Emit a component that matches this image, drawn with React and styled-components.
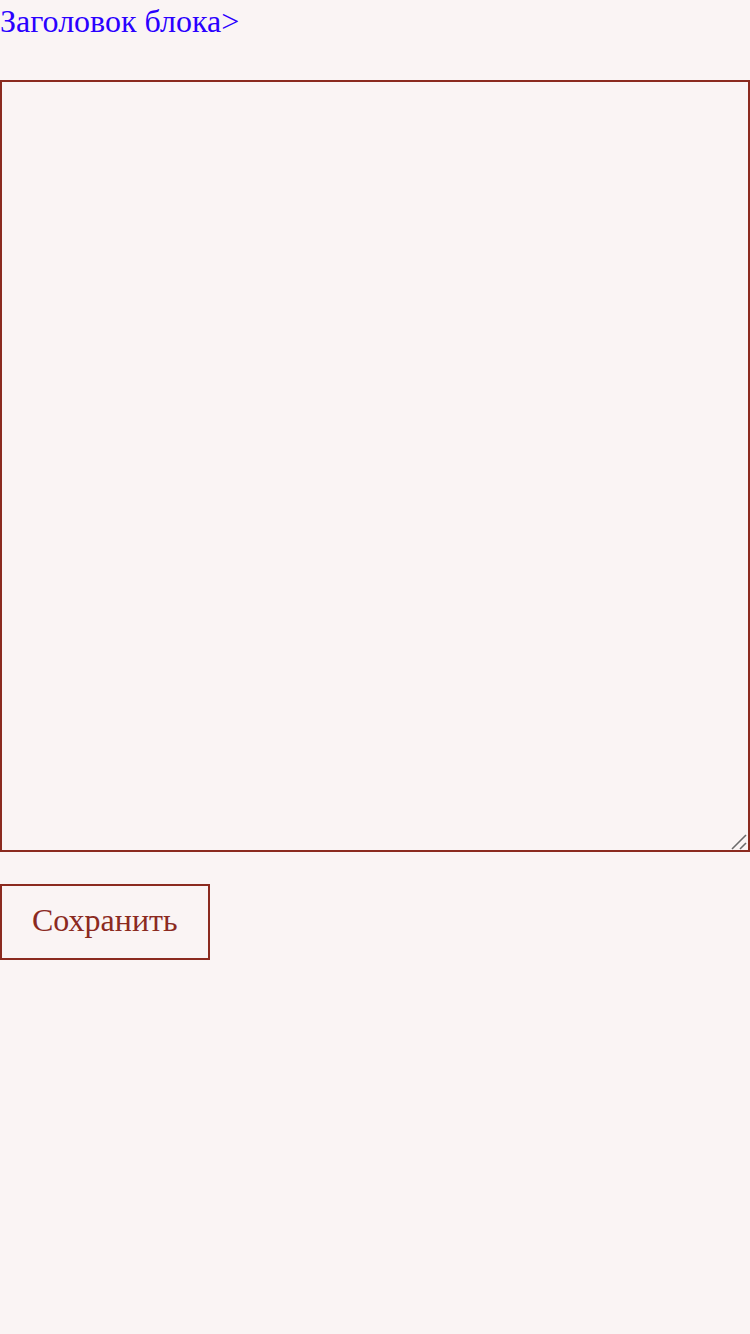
import React from "react";
import styled, { createGlobalStyle } from "styled-components";

const Global = createGlobalStyle`
  html, body { margin: 0; padding: 0; background: #faf4f4; }
  body { font-family: "Liberation Serif", "Times New Roman", serif; }
`;

const Page = styled.div`
  display: flex;
  flex-direction: column;
  align-items: flex-start;
  min-height: 1334px;
  background: #faf4f4;
`;

const TitleLink = styled.a`
  font-size: 32px;
  line-height: 42px;
  height: 42px;
  color: #2a00ff;
  text-decoration: none;
  margin-bottom: 38px;
`;

const EditorWrap = styled.div`
  position: relative;
  width: 750px;
  height: 772px;
`;

const Editor = styled.textarea`
  box-sizing: border-box;
  width: 100%;
  height: 100%;
  margin: 0;
  border: 2px solid #8b2a1f;
  background: #faf4f4;
  font-family: "Liberation Serif", serif;
  font-size: 32px;
  outline: none;
  display: block;
  resize: none;
`;

const Grip = styled.svg`
  position: absolute;
  right: 2px;
  bottom: 2px;
  width: 18px;
  height: 18px;
  pointer-events: none;
`;

const SaveButton = styled.button`
  box-sizing: border-box;
  margin-top: 32px;
  height: 76px;
  padding: 0 30px 4px;
  border: 2px solid #8b2a1f;
  background: #faf4f4;
  color: #8b2a1f;
  font-family: "Liberation Serif", serif;
  font-size: 32px;
  line-height: 37px;
  cursor: pointer;
`;

export default function App() {
  return (
    <>
      <Global />
      <Page>
        <TitleLink href="#">Заголовок блока&gt;</TitleLink>
        <EditorWrap>
          <Editor />
          <Grip viewBox="0 0 18 18">
            <line x1="2" y1="17" x2="16" y2="3" stroke="#6b6b6b" strokeWidth="1.6" />
            <line x1="10" y1="17" x2="16" y2="11" stroke="#6b6b6b" strokeWidth="1.6" />
          </Grip>
        </EditorWrap>
        <SaveButton>Сохранить</SaveButton>
      </Page>
    </>
  );
}
